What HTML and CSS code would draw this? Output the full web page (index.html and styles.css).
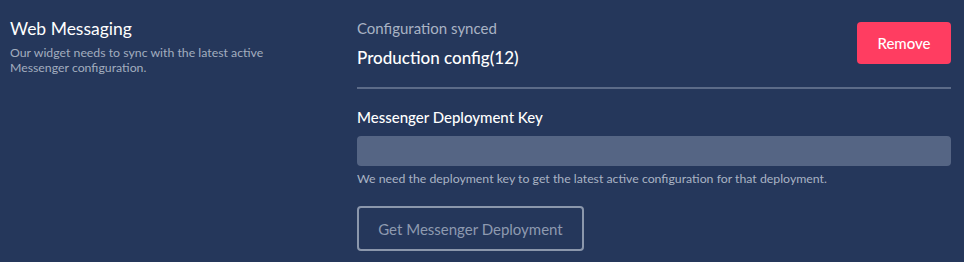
FILE: index.html
```html
<!DOCTYPE html>
<html>

<head>
  <title>Web Messaging</title>
  <link rel="stylesheet" href="styles.css">
</head>

<body>
  <div class="integration">
    <div class="intro">
      <h2 class="intro-title">Web Messaging</h2>
      <p class="intro-text">Our widget needs to sync with the latest active Messenger configuration.</p>
    </div>
    <div class="config">
      <div class="config-head">
        <div>
          <p class="config-status">Configuration synced</p>
          <p class="config-name">Production config(12)</p>
        </div>
        <button class="btn-remove">Remove</button>
      </div>
      <hr class="divider">
      <label for="deployment-key" class="field-label">Messenger Deployment Key</label>
      <input type="text" id="deployment-key" class="field-input">
      <p class="field-help">We need the deployment key to get the latest active configuration for that deployment.</p>
      <button class="btn-outline" disabled>Get Messenger Deployment</button>
    </div>
  </div>
</body>
</html>
```

FILE: styles.css
```css
body {
  margin: 0;
  background: #25375b;
  font-family: Lato, 'Open Sans', sans-serif;
  color: #fff;
}

.integration {
  display: flex;
  padding: 20px 13px 0 10px;
}

.intro {
  width: 347px;
  flex: none;
}

.intro-title {
  margin: 0;
  font-size: 17.5px;
  line-height: 18px;
  font-weight: 400;
}

.intro-text {
  margin: 7px 0 0;
  font-size: 12.3px;
  line-height: 15px;
  color: #a2adbf;
  width: 290px;
}

.config {
  flex: 1;
  display: flex;
  flex-direction: column;
  align-items: flex-start;
}

.config-head {
  display: flex;
  justify-content: space-between;
  align-items: flex-start;
  width: 100%;
  height: 48px;
}

.config-status {
  margin: 0;
  font-size: 15px;
  line-height: 16px;
  color: #a9b3c4;
}

.config-name {
  margin: 12px 0 0;
  font-size: 17px;
  line-height: 20px;
  font-weight: 500;
}

.btn-remove {
  margin-top: 2px;
  width: 94px;
  height: 42px;
  border: none;
  border-radius: 4px;
  background: #ff3d61;
  color: #fff;
  font-family: inherit;
  font-size: 15px;
  font-weight: 500;
}

.divider {
  margin: 19px 0 0;
  width: 100%;
  height: 2px;
  border: none;
  background: #5c6b88;
}

.field-label {
  margin-top: 19px;
  font-size: 15px;
  line-height: 18px;
  font-weight: 500;
}

.field-input {
  margin-top: 10px;
  box-sizing: border-box;
  width: 100%;
  height: 30px;
  border: none;
  border-radius: 4px;
  background: #556584;
}

.field-help {
  margin: 5px 0 0;
  font-size: 12.3px;
  line-height: 15px;
  color: #a9b3c4;
}

.btn-outline {
  margin-top: 20px;
  width: 227px;
  height: 45px;
  border: 2px solid #8b97ac;
  border-radius: 4px;
  background: transparent;
  color: #8e9ab0;
  font-family: inherit;
  font-size: 15px;
}
```
